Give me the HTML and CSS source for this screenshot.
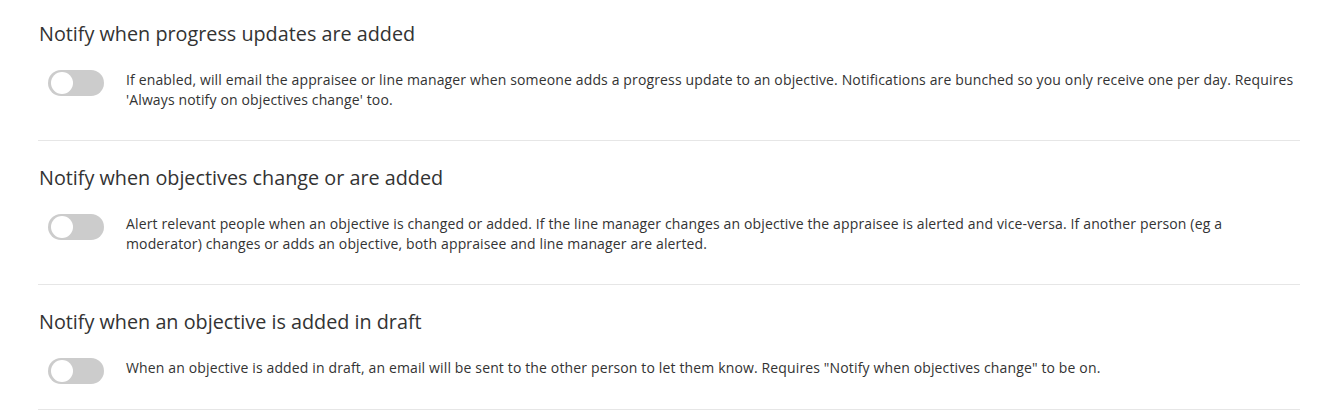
FILE: index.html
```html
<!DOCTYPE html>
<html lang="en">
<head>
<meta charset="utf-8">
<link rel="stylesheet" href="styles.css">
</head>
<body>
<div class="settings">
  <section class="setting">
    <h2 class="setting-title">Notify when progress updates are added</h2>
    <div class="setting-row">
      <span class="toggle"><span class="knob"></span></span>
      <p class="setting-desc">If enabled, will email the appraisee or line manager when someone adds a progress update to an objective. Notifications are bunched so you only receive one per day. Requires 'Always notify on objectives change' too.</p>
    </div>
  </section>
  <section class="setting">
    <h2 class="setting-title">Notify when objectives change or are added</h2>
    <div class="setting-row">
      <span class="toggle"><span class="knob"></span></span>
      <p class="setting-desc">Alert relevant people when an objective is changed or added. If the line manager changes an objective the appraisee is alerted and vice-versa. If another person (eg a moderator) changes or adds an objective, both appraisee and line manager are alerted.</p>
    </div>
  </section>
  <section class="setting">
    <h2 class="setting-title">Notify when an objective is added in draft</h2>
    <div class="setting-row">
      <span class="toggle"><span class="knob"></span></span>
      <p class="setting-desc">When an objective is added in draft, an email will be sent to the other person to let them know. Requires "Notify when objectives change" to be on.</p>
    </div>
  </section>
</div>
</body>
</html>
```
FILE: styles.css
```css
html, body {
  margin: 0;
  padding: 0;
  background: #fff;
}
body {
  font-family: "Open Sans", "Liberation Sans", sans-serif;
  color: #333;
}
.settings {
  width: 1262px;
  margin-left: 38px;
  padding-top: 20px;
}
.setting {
  border-bottom: 1px solid #e6e6e6;
  padding-bottom: 30px;
  padding-top: 0;
}
.setting + .setting {
  padding-top: 23px;
}
.setting-title {
  margin: 0 0 0 1px;
  font-size: 19.8px;
  font-weight: 400;
  line-height: 28px;
  color: #333;
}
.setting-row {
  display: flex;
  align-items: flex-start;
  margin-top: 21px;
  padding-left: 10px;
}
.toggle {
  flex: none;
  width: 56px;
  height: 26px;
  border-radius: 13px;
  background: #ccc;
  position: relative;
  margin-top: 1px;
  margin-bottom: -5px;
}
.knob {
  position: absolute;
  left: 3px;
  top: 2px;
  width: 22px;
  height: 22px;
  border-radius: 50%;
  background: #fff;
}
.setting-desc {
  margin: 1px 0 0 22px;
  font-size: 14px;
  letter-spacing: 0.14px;
  line-height: 20px;
  color: #333;
}
```
